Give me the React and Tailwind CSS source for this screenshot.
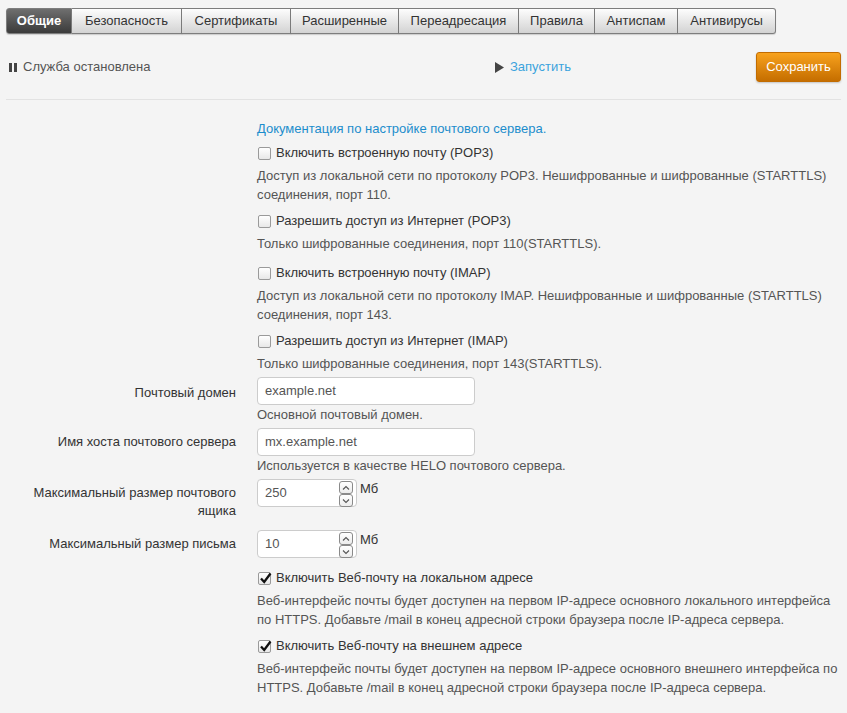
import React from "react";

const tabs = [
  ["Общие", "w-[66px]"],
  ["Безопасность", "w-[110px]"],
  ["Сертификаты", "w-[109px]"],
  ["Расширенные", "w-[108px]"],
  ["Переадресация", "w-[120px]"],
  ["Правила", "w-[76px]"],
  ["Антиспам", "w-[83px]"],
  ["Антивирусы", "w-[98px]"],
];

function Box({ checked }) {
  return (
    <span className="relative inline-block w-[13px] h-[13px] rounded-[2px] border border-[#9a9a9a] bg-gradient-to-b from-white to-[#e8e8e8] shrink-0">
      {checked && (
        <svg className="absolute left-[0px] top-[-2px]" width="14" height="14" viewBox="0 0 14 14">
          <path d="M2 7.5 L5.2 11 L11.5 2.5" stroke="#111" strokeWidth="2.3" fill="none" strokeLinejoin="miter" />
        </svg>
      )}
    </span>
  );
}

function Check({ label, checked, children, mb = "mb-[7px]" }) {
  return (
    <div className={mb}>
      <div className="flex items-center h-[20px] gap-[5px] pl-[1px] text-[#333]">
        <Box checked={checked} />
        <span>{label}</span>
      </div>
      {children && <div className="mt-[3px] leading-[19px] text-[#555]">{children}</div>}
    </div>
  );
}

function Spin() {
  const btn = "w-[14px] h-[13px] rounded-[3px] border border-[#8a8a8a] bg-gradient-to-b from-white to-[#ececec] flex items-center justify-center";
  return (
    <div className="absolute right-[3px] top-[1px] flex flex-col gap-[0px]">
      <div className={btn}>
        <svg width="8" height="6" viewBox="0 0 8 6"><path d="M1 4.5 L4 1.5 L7 4.5" stroke="#555" strokeWidth="1.1" fill="none" /></svg>
      </div>
      <div className={btn}>
        <svg width="8" height="6" viewBox="0 0 8 6"><path d="M1 1.5 L4 4.5 L7 1.5" stroke="#555" strokeWidth="1.1" fill="none" /></svg>
      </div>
    </div>
  );
}

function Row({ label, children }) {
  return (
    <>
      <div className="pt-[5px] leading-[18px] text-right text-[#333]">{label}</div>
      <div>{children}</div>
    </>
  );
}

export default function App() {
  return (
    <div
      className="min-h-[713px] bg-[#f4f4f4] px-[6px] text-[13px]"
      style={{ fontFamily: '"Liberation Sans", Arial, sans-serif' }}
    >
      {/* Tabs */}
      <div className="pt-[8px] flex">
        {tabs.map(([t, w], i) => {
          const active = i === 0;
          return (
            <div
              key={t}
              className={
                "h-[26px] flex items-center justify-center border-y border-r border-[#7d7d7d] shadow-[0_1px_1px_rgba(0,0,0,0.15)] " +
                w +
                (i === 0 ? " border-l rounded-l-[3px]" : "") +
                (i === tabs.length - 1 ? " rounded-r-[3px]" : "") +
                (active
                  ? " bg-gradient-to-b from-[#6f6f6f] to-[#3b3b3b] text-white font-bold"
                  : " bg-gradient-to-b from-[#fdfdfd] to-[#d3d3d3] text-[#333]")
              }
            >
              {t}
            </div>
          );
        })}
      </div>

      {/* Toolbar */}
      <div className="mt-[18px] h-[30px] flex items-center">
        <div className="w-[489px] flex items-center">
          <span className="ml-[3px] flex gap-[2px]">
            <span className="w-[3px] h-[9px] bg-[#444]" />
            <span className="w-[3px] h-[9px] bg-[#444]" />
          </span>
          <span className="ml-[6px] text-[#555]">Служба остановлена</span>
        </div>
        <div className="flex items-center gap-[6px] text-[#3aa3dd]">
          <svg width="9" height="11" viewBox="0 0 9 11"><path d="M0 0 L9 5.5 L0 11 Z" fill="#444" /></svg>
          <span>Запустить</span>
        </div>
        <button className="ml-auto w-[85px] h-[30px] rounded-[3px] border border-[#c26c00] bg-gradient-to-b from-[#f8a21c] to-[#c56e00] text-white text-[13px] shadow-[0_1px_2px_rgba(0,0,0,0.2)]">
          Сохранить
        </button>
      </div>

      <div className="mt-[17px] border-t border-[#e2e2e2]" />

      {/* Content */}
      <div className="pt-[19px] grid grid-cols-[230px_584px] gap-x-[21px]">
        <div />
        <div>
          <div className="leading-[20px] text-[#1c8dcc] mb-[4px]">Документация по настройке почтового сервера.</div>
          <Check label="Включить встроенную почту (POP3)">
            Доступ из локальной сети по протоколу POP3. Нешифрованные и шифрованные (STARTTLS) соединения, порт 110.
          </Check>
          <Check label="Разрешить доступ из Интернет (POP3)" mb="mb-[10px]">
            Только шифрованные соединения, порт 110(STARTTLS).
          </Check>
          <Check label="Включить встроенную почту (IMAP)">
            Доступ из локальной сети по протоколу IMAP. Нешифрованные и шифрованные (STARTTLS) соединения, порт 143.
          </Check>
          <Check label="Разрешить доступ из Интернет (IMAP)" mb="mb-[6px]">
            Только шифрованные соединения, порт 143(STARTTLS).
          </Check>
        </div>

        <Row label="Почтовый домен">
          <div className="mt-[-2px] w-[218px] h-[28px] border border-[#cccccc] rounded-[4px] bg-white px-[7px] flex items-center text-[#555]">example.net</div>
          <div className="leading-[19px] text-[#555] mb-[4px]">Основной почтовый домен.</div>
        </Row>
        <Row label="Имя хоста почтового сервера">
          <div className="w-[218px] h-[28px] border border-[#cccccc] rounded-[4px] bg-white px-[7px] flex items-center text-[#555]">mx.example.net</div>
          <div className="leading-[19px] text-[#555] mb-[4px]">Используется в качестве HELO почтового сервера.</div>
        </Row>
        <Row label={<>Максимальный размер почтового<br />ящика</>}>
          <div className="flex items-start h-[51px]">
            <div className="relative w-[100px] h-[28px] border border-[#cccccc] rounded-[4px] bg-white px-[7px] flex items-center text-[#555]">
              250
              <Spin />
            </div>
            <span className="ml-[3px] leading-[20px] text-[#333]">Мб</span>
          </div>
        </Row>
        <Row label="Максимальный размер письма">
          <div className="flex items-start">
            <div className="relative w-[100px] h-[28px] border border-[#cccccc] rounded-[4px] bg-white px-[7px] flex items-center text-[#555]">
              10
              <Spin />
            </div>
            <span className="ml-[3px] leading-[20px] text-[#333]">Мб</span>
          </div>
        </Row>

        <div />
        <div className="mt-[10px]">
          <Check label="Включить Веб-почту на локальном адресе" checked>
            Веб-интерфейс почты будет доступен на первом IP-адресе основного локального интерфейса по HTTPS. Добавьте /mail в конец адресной строки браузера после IP-адреса сервера.
          </Check>
          <Check label="Включить Веб-почту на внешнем адресе" checked>
            Веб-интерфейс почты будет доступен на первом IP-адресе основного внешнего интерфейса по HTTPS. Добавьте /mail в конец адресной строки браузера после IP-адреса сервера.
          </Check>
        </div>
      </div>
    </div>
  );
}
